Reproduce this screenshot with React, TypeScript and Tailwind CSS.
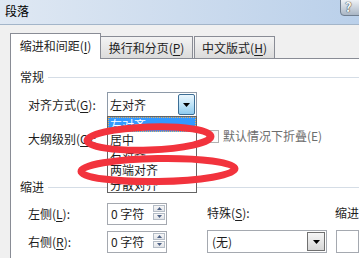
const Arrow = ({ color = "#000" }: { color?: string }) => (
  <svg width="7" height="4" viewBox="0 0 7 4">
    <path d="M0 0H7L3.5 4Z" fill={color} />
  </svg>
);

const Tri = ({ up }: { up?: boolean }) => (
  <svg width="5" height="3" viewBox="0 0 5 3">
    <path d={up ? "M0 3H5L2.5 0Z" : "M0 0H5L2.5 3Z"} fill="#4d6185" />
  </svg>
);

function U({ children }: { children: string }) {
  return <span className="underline underline-offset-[2px] decoration-1">{children}</span>;
}

function SpinBox() {
  return (
    <div className="w-[60px] h-[22px] bg-white border border-[#a5a9b0] flex items-center pl-[3px] pr-px">
      <span className="flex-1">0 字符</span>
      <div className="flex flex-col gap-px -mt-[3px]">
        <div className="w-[12px] h-[7px] border border-[#b4bcc6] bg-gradient-to-b from-[#f7f7f7] to-[#e2e4e8] flex items-center justify-center">
          <Tri up />
        </div>
        <div className="w-[12px] h-[7px] border border-[#b4bcc6] bg-gradient-to-b from-[#f7f7f7] to-[#e2e4e8] flex items-center justify-center">
          <Tri />
        </div>
      </div>
    </div>
  );
}

const items = ["左对齐", "居中", "右对齐", "两端对齐", "分散对齐"];

export default function App() {
  return (
    <div className="relative w-[359px] h-[258px] overflow-hidden bg-[#f0f0f0] text-[12px] leading-[16px] text-[#1e1e1e] font-['Noto_Sans_CJK_SC','Noto_Sans',sans-serif]">
      {/* title bar */}
      <div className="relative h-[25px] border-b border-[#a3b5c9] bg-gradient-to-r from-[#dfe8f3] via-[#cddcee] to-[#bad0ea] flex items-center pl-[5px] pb-[2px]">
        <span className="text-black">段落</span>
        <div className="absolute right-[-8px] top-[-1px] w-[27px] h-[17px] rounded-bl-[4px] border border-[#6f7e90] bg-gradient-to-b from-[#eef2f6] to-[#a9b6c5] flex items-start justify-start pl-[4px] leading-[14px]">
          <span className="font-bold text-[13px] text-[#f4f6f8] [text-shadow:0_0_1px_#333,0_0_1px_#333]">?</span>
        </div>
      </div>

      {/* body */}
      <div className="flex flex-col pl-[10px] pt-[8px] h-[233px]">
        {/* tabs */}
        <div className="relative z-10 flex items-end h-[25px]">
          <div className="w-[91px] h-[26px] -mb-px bg-white border border-b-0 border-[#898c95] flex items-center justify-center pb-[1px]">
            缩进和间距(<U>I</U>)
          </div>
          <div className="w-[92px] h-[22px] border border-b-0 border-l-0 border-[#898c95] bg-gradient-to-b from-[#f3f3f3] to-[#dcdcdc] flex items-center justify-center">
            换行和分页(<U>P</U>)
          </div>
          <div className="w-[81px] h-[22px] ml-px border border-b-0 border-[#898c95] bg-gradient-to-b from-[#f3f3f3] to-[#dcdcdc] flex items-center justify-center">
            中文版式(<U>H</U>)
          </div>
        </div>

        {/* panel */}
        <div className="flex-1 bg-white border-l border-t border-[#898c95] flex flex-col pl-[9px]">
          <div className="mt-[10px] h-[16px] flex items-center">
            <span>常规</span>
            <div className="flex-1 h-px bg-[#d5dde6] ml-[4px] mt-px" />
          </div>

          <div className="mt-[7px] h-[25px] flex items-center pl-[8px]">
            <span className="w-[79px]">对齐方式(<U>G</U>):</span>
            <div className="relative w-[90px] h-[25px] bg-white border border-[#8e9aa8] flex p-px">
              <span className="flex-1 pl-[1px] flex items-center">左对齐</span>
              <div className="w-[17px] h-full border border-[#3c6e96] rounded-[2px] bg-gradient-to-b from-[#eaf6fd] via-[#bfe4f8] to-[#8ecbef] flex items-center justify-center">
                <Arrow />
              </div>
              <div className="absolute left-[-1px] top-full w-[90px] bg-white border border-[#646464] z-20">
                {items.map((t, i) => (
                  <div
                    key={t}
                    className={
                      i === 0
                        ? "h-[15px] pl-[1px] flex items-center bg-[#3399ff] text-white border border-dotted border-[#e8b060]"
                        : "h-[15px] pl-[2px] flex items-center"
                    }
                  >
                    {t}
                  </div>
                ))}
              </div>
            </div>
          </div>

          <div className="mt-[10px] h-[22px] flex items-center pl-[8px]">
            <span className="w-[79px] mt-[1px]">大纲级别(<U>O</U>):</span>
            <div className="w-[90px] h-[22px] border border-[#a5a9b0] bg-white" />
            <div className="ml-[9px] w-[13px] h-[13px] border border-[#b1b1b1] bg-gradient-to-br from-[#f0f0f0] to-white -mt-[3px]" />
            <span className="ml-[4px] text-[#6d6d6d] -mt-[4px]">默认情况下折叠(E)</span>
          </div>

          <div className="mt-[30px] h-[16px] flex items-center">
            <span>缩进</span>
            <div className="flex-1 h-px bg-[#d5dde6] ml-[4px]" />
          </div>

          <div className="flex">
            <div className="mt-[8px] pl-[8px] flex flex-col gap-[6px]">
              <div className="h-[22px] flex items-center">
                <span className="w-[79px]">左侧(<U>L</U>):</span>
                <SpinBox />
              </div>
              <div className="h-[22px] flex items-center">
                <span className="w-[79px]">右侧(<U>R</U>):</span>
                <SpinBox />
              </div>
            </div>

            <div className="mt-[10px] ml-[40px] w-[120px] flex flex-col gap-[9px]">
              <span>特殊(<U>S</U>):</span>
              <div className="h-[23px] bg-white border border-[#a5a9b0] flex p-px">
                <span className="flex-1 pl-[3px] flex items-center">(无)</span>
                <div className="w-[18px] h-full border border-[#707070] bg-gradient-to-b from-[#f6f6f6] to-[#d6d6d6] flex items-center justify-center">
                  <Arrow />
                </div>
              </div>
            </div>

            <div className="mt-[10px] ml-[8px] flex-1 flex flex-col gap-[9px]">
              <span>缩进</span>
              <div className="h-[23px] ml-px bg-white border border-[#a5a9b0]" />
            </div>
          </div>
        </div>
      </div>

      {/* red annotation marks */}
      <svg className="absolute inset-0 z-30 pointer-events-none" width="359" height="258" viewBox="0 0 359 258">
        <ellipse cx="149" cy="138.5" rx="62" ry="11.5" fill="none" stroke="#f2333d" strokeWidth="7" transform="rotate(-2 149 138.5)" />
        <ellipse cx="158" cy="170" rx="77" ry="11.5" fill="none" stroke="#f2333d" strokeWidth="7" transform="rotate(-1 158 170)" />
      </svg>
    </div>
  );
}
